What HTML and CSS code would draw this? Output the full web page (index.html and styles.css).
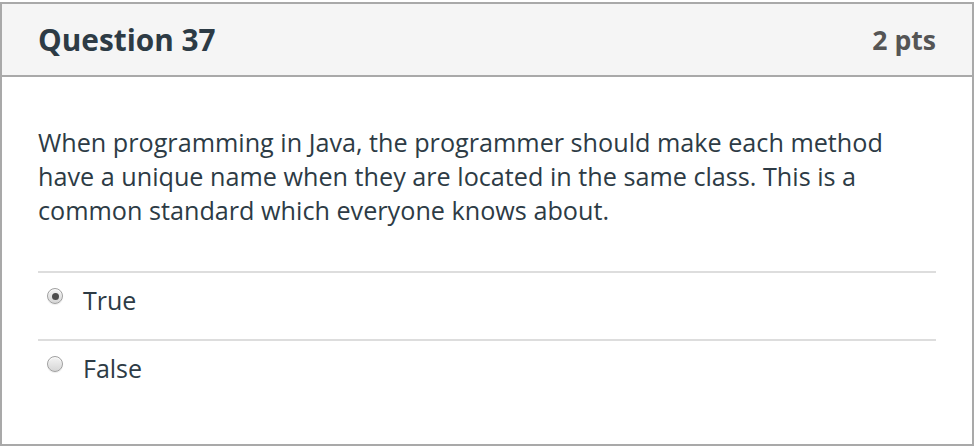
FILE: index.html
```html
<!DOCTYPE html>
<html>
<head>
<meta charset="utf-8">
<link rel="stylesheet" href="styles.css">
</head>
<body>
<div class="question">
  <div class="q-header">
    <h2 class="q-title">Question 37</h2>
    <span class="q-points">2 pts</span>
  </div>
  <div class="q-body">
    <p class="q-text">When programming in Java, the programmer should make each method have a unique name when they are located in the same class. This is a common standard which everyone knows about.</p>
    <div class="answers">
      <label class="answer">
        <span class="radio checked"></span>
        <span class="answer-label">True</span>
      </label>
      <label class="answer">
        <span class="radio"></span>
        <span class="answer-label">False</span>
      </label>
    </div>
  </div>
</div>
</body>
</html>
```
FILE: styles.css
```css
html, body {
  margin: 0;
  padding: 0;
  background: #ffffff;
}
body {
  font-family: "Open Sans", "Liberation Sans", sans-serif;
  color: #2d3b45;
  padding-top: 2px;
}
.question {
  width: 970px;
  height: 440px;
  border: 2px solid #a9a9a9;
  display: flex;
  flex-direction: column;
}
.q-header {
  height: 71px;
  background: #f5f5f5;
  border-bottom: 2px solid #a9a9a9;
  display: flex;
  align-items: center;
  justify-content: space-between;
  padding: 0 36px;
}
.q-title {
  margin: 0;
  font-size: 29.8px;
  font-weight: 700;
  color: #2d3b45;
}
.q-points {
  font-size: 26.6px;
  font-weight: 700;
  color: #555555;
}
.q-body {
  padding: 0 36px;
  flex: 1;
}
.q-text {
  margin: 48px 0 0;
  font-size: 25.2px;
  line-height: 34px;
  color: #2d3b45;
}
.answers {
  margin-top: 44px;
}
.answer {
  display: flex;
  align-items: center;
  height: 66px;
  border-top: 2px solid #dddddd;
  padding-left: 9px;
}
.answer-label {
  position: relative;
  top: -6px;
  margin-left: 20px;
  font-size: 25px;
  color: #2d3b45;
}
.radio {
  position: relative;
  top: -10px;
  width: 14px;
  height: 14px;
  border-radius: 50%;
  border: 1px solid #a0a0a0;
  background: linear-gradient(#f4f4f4, #d6d6d6);
  box-shadow: inset 0 1px 1px rgba(255,255,255,0.8), 0 1px 1px rgba(0,0,0,0.08);
  display: flex;
  align-items: center;
  justify-content: center;
}
.radio.checked::after {
  content: "";
  width: 7px;
  height: 7px;
  border-radius: 50%;
  background: #4d4d4d;
}
```
